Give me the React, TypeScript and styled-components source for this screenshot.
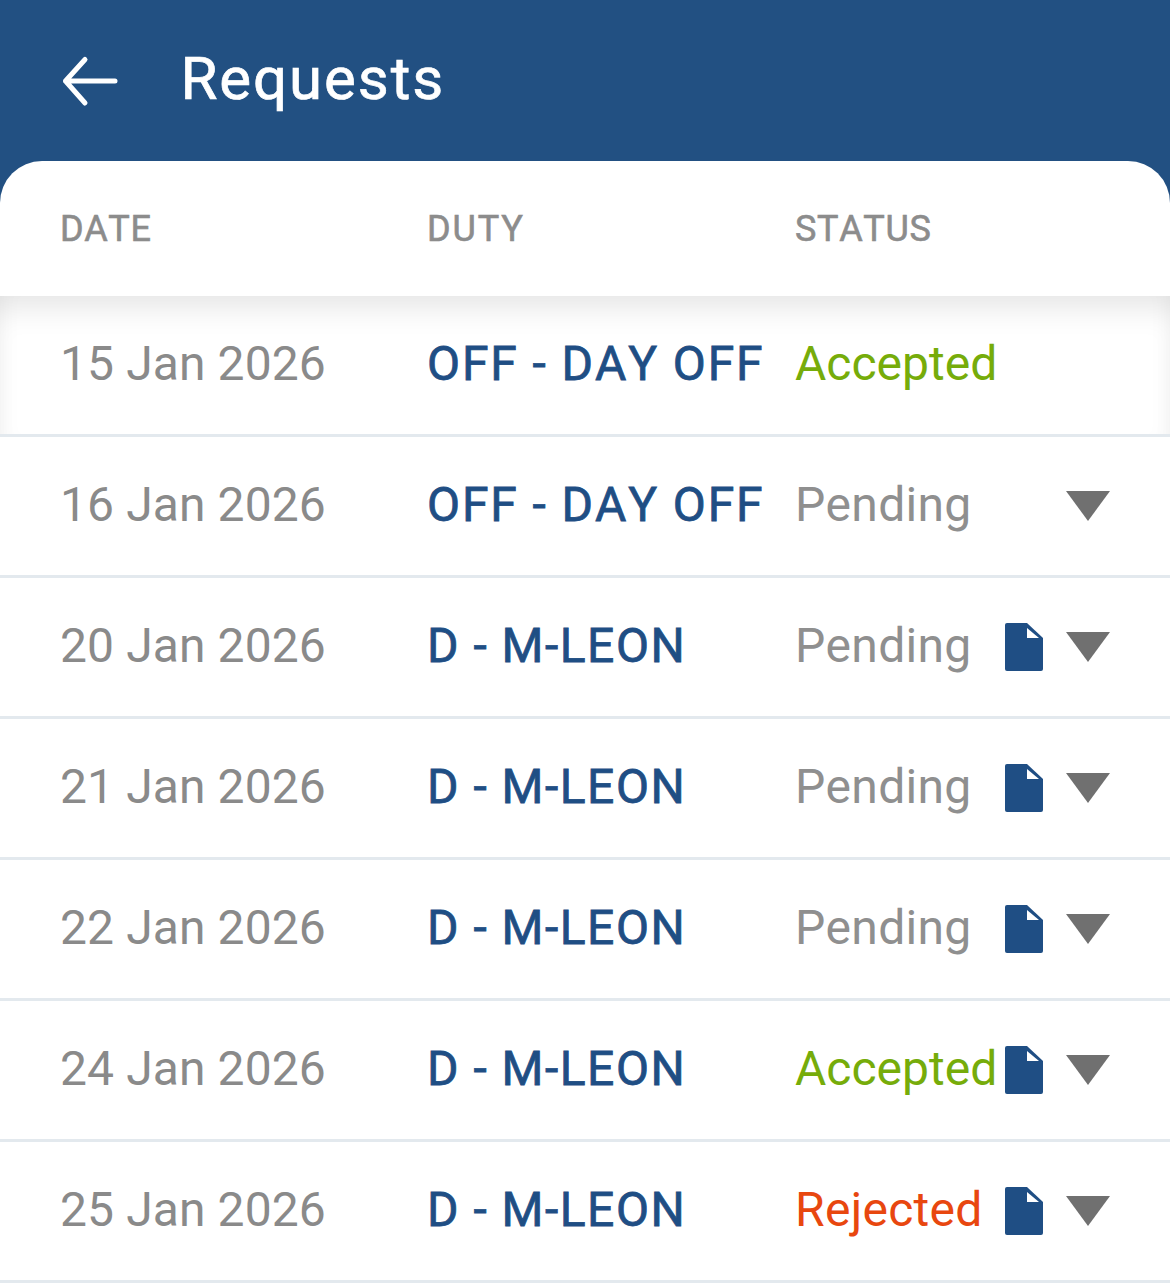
import React from 'react';
import styled, { createGlobalStyle } from 'styled-components';

const GlobalStyle = createGlobalStyle`
    html, body {
        margin: 0;
        padding: 0;
        background: #fff;
        font-family: Roboto, "Liberation Sans", sans-serif;
        font-kerning: none;
    }
`;

const Page = styled.div`
    width: 1170px;
    height: 1284px;
    overflow: hidden;
    background: #225082;
`;

const AppBar = styled.header`
    height: 161px;
    display: flex;
    align-items: center;
    padding-left: 61px;
    box-sizing: border-box;
`;

const BackArrow = styled.svg`
    width: 58px;
    height: 52px;
    display: block;
`;

const Title = styled.h1`
    margin: 0 0 3px 61.5px;
    font-size: 60px;
    font-weight: 400;
    -webkit-text-stroke: 0.7px #fff;
    line-height: 1;
    color: #fff;
    letter-spacing: 1.9px;
`;

const Sheet = styled.main`
    background: #fff;
    border-radius: 42px 42px 0 0;
    height: 1123px;
`;

const Columns = styled.div`
    display: grid;
    grid-template-columns: 367px 368px 1fr;
    padding-left: 60px;
    align-items: center;
`;

const HeadRow = styled(Columns)`
    height: 135px;
`;

const HeadCell = styled.span<{ $spacing: number }>`
    font-size: 36px;
    font-weight: 400;
    -webkit-text-stroke: 0.6px #8c8c8c;
    color: #8c8c8c;
    letter-spacing: ${p => p.$spacing}px;
`;

const Row = styled(Columns)<{ $first?: boolean }>`
    height: 141px;
    box-sizing: border-box;
    border-bottom: 3px solid #e3e9ee;
    box-shadow: ${p => (p.$first ? 'inset 0 26px 30px -14px rgba(0, 0, 0, 0.1), inset 20px 0 24px -20px rgba(0, 0, 0, 0.05), inset -20px 0 24px -20px rgba(0, 0, 0, 0.05)' : 'none')};
`;

const DateText = styled.span`
    font-size: 48px;
    color: #8a8a8a;
    margin-bottom: 4px;
    letter-spacing: 0.1px;
`;

const Duty = styled.span<{ $spacing: number }>`
    font-size: 48px;
    font-weight: 400;
    -webkit-text-stroke: 0.8px #1f4e84;
    color: #1f4e84;
    white-space: nowrap;
    letter-spacing: ${p => p.$spacing}px;
    margin-bottom: 4px;
`;

const StatusCell = styled.div`
    display: flex;
    align-items: center;
    padding-right: 60px;
`;

const statusColors = {
    Accepted: '#76ac0a',
    Pending: '#8f8f8f',
    Rejected: '#e8470f',
};

const StatusText = styled.span<{ $status: keyof typeof statusColors }>`
    font-size: 48px;
    color: ${p => statusColors[p.$status]};
    margin-right: auto;
    margin-bottom: 4px;
    letter-spacing: ${p => (p.$status === 'Accepted' ? 0 : 0.3)}px;
`;

const FileIcon = styled.svg`
    width: 38px;
    height: 48px;
    display: block;
    flex: none;
`;

const Caret = styled.div`
    width: 44px;
    height: 30px;
    margin-left: 23px;
    flex: none;
    background: #707070;
    clip-path: polygon(0 0, 100% 0, 50% 100%);
`;

type Request = {
    date: string;
    duty: string;
    status: keyof typeof statusColors;
    file?: boolean;
    caret?: boolean;
};

const requests: Request[] = [
    { date: '15 Jan 2026', duty: 'OFF - DAY OFF', status: 'Accepted' },
    { date: '16 Jan 2026', duty: 'OFF - DAY OFF', status: 'Pending', caret: true },
    { date: '20 Jan 2026', duty: 'D - M-LEON', status: 'Pending', file: true, caret: true },
    { date: '21 Jan 2026', duty: 'D - M-LEON', status: 'Pending', file: true, caret: true },
    { date: '22 Jan 2026', duty: 'D - M-LEON', status: 'Pending', file: true, caret: true },
    { date: '24 Jan 2026', duty: 'D - M-LEON', status: 'Accepted', file: true, caret: true },
    { date: '25 Jan 2026', duty: 'D - M-LEON', status: 'Rejected', file: true, caret: true },
];

const App: React.FC = () => {
    return (
        <Page>
            <GlobalStyle />
            <AppBar>
                <BackArrow viewBox="0 0 58 52" fill="none" stroke="#fff" strokeWidth="5" strokeLinecap="round" strokeLinejoin="round">
                    <path d="M4.5 26H54M24 4.5L4.5 26L24 48" />
                </BackArrow>
                <Title>Requests</Title>
            </AppBar>
            <Sheet>
                <HeadRow>
                    <HeadCell $spacing={0.6}>DATE</HeadCell>
                    <HeadCell $spacing={1.9}>DUTY</HeadCell>
                    <HeadCell $spacing={0.65}>STATUS</HeadCell>
                </HeadRow>
                {requests.map((r, i) => (
                    <Row key={r.date} $first={i === 0}>
                        <DateText>{r.date}</DateText>
                        <Duty $spacing={r.duty.startsWith('OFF') ? 1.9 : 1.5}>{r.duty}</Duty>
                        <StatusCell>
                            <StatusText $status={r.status}>{r.status}</StatusText>
                            {r.file && (
                                <FileIcon viewBox="0 0 38 48">
                                    <path fill="#1f4e84" d="M2 0H22L38 15V46A2 2 0 0 1 36 48H2A2 2 0 0 1 0 46V2A2 2 0 0 1 2 0Z" />
                                    <path fill="#fff" d="M22 5V15H34Z" />
                                </FileIcon>
                            )}
                            {r.caret && <Caret />}
                        </StatusCell>
                    </Row>
                ))}
            </Sheet>
        </Page>
    );
};

export default App;
